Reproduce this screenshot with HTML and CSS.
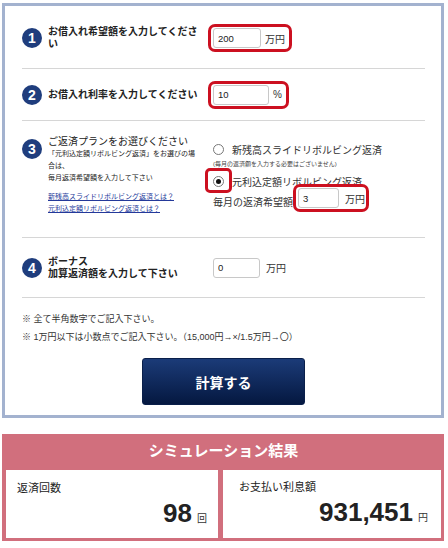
FILE: index.html
```html
<!DOCTYPE html>
<html lang="ja">
<head>
    <meta charset="UTF-8">
    <meta name="viewport" content="width=device-width, initial-scale=1.0">
    <title>返済シミュレーション</title>
    <link rel="stylesheet" href="styles.css">
</head>
<body>

    <div class="form-box">
        <div class="row row-1">
            <div class="row-head">
                <span class="num">1</span>
                <p class="label">お借入れ希望額を入力してください</p>
            </div>
            <div class="row-body">
                <span class="mark"><input class="w48" type="text" value="200"><span class="unit">万円</span></span>
            </div>
        </div>

        <div class="row row-2">
            <div class="row-head">
                <span class="num">2</span>
                <p class="label">お借入れ利率を入力してください</p>
            </div>
            <div class="row-body">
                <span class="mark"><input class="w56" type="text" value="10"><span class="unit">%</span></span>
            </div>
        </div>

        <div class="row row-3">
            <div class="row-head">
                <span class="num">3</span>
                <div class="plan-text">
                    <p class="plan-title">ご返済プランをお選びください</p>
                    <p class="plan-note">「元利込定額リボルビング返済」をお選びの場合は、<br>毎月返済希望額を入力して下さい</p>
                    <p class="plan-links">
                        <a href="#">新残高スライドリボルビング返済とは？</a><br>
                        <a href="#">元利込定額リボルビング返済とは？</a>
                    </p>
                </div>
            </div>
            <div class="row-body plan-options">
                <label class="option"><span class="radio"></span>新残高スライドリボルビング返済</label>
                <p class="option-note">(毎月の返済額を入力する必要はございません)</p>
                <label class="option option-2"><span class="radio checked"></span>元利込定額リボルビング返済</label>
                <div class="monthly">
                    <span class="monthly-label">毎月の返済希望額</span>
                    <span class="mark mark-3"><input class="w41" type="text" value="3"><span class="unit unit-gap">万円</span></span>
                </div>
            </div>
        </div>

        <div class="row row-4">
            <div class="row-head">
                <span class="num">4</span>
                <p class="label">ボーナス<br>加算返済額を入力して下さい</p>
            </div>
            <div class="row-body bonus">
                <input class="w47" type="text" value="0"><span class="unit unit-gap">万円</span>
            </div>
        </div>

        <div class="notes">
            <p>※ 全て半角数字でご記入下さい。</p>
            <p>※ 1万円以下は小数点でご記入下さい。（15,000円→×/1.5万円→〇）</p>
        </div>

        <button class="calc-btn">計算する</button>
    </div>

    <!-- 結果 -->
    <div class="result">
        <div class="result-title">シミュレーション結果</div>
        <div class="result-grid">
            <div class="result-cell cell-left">
                <p class="result-label">返済回数</p>
                <p class="result-value"><span class="big">98</span><span class="small">回</span></p>
            </div>
            <div class="result-cell cell-right">
                <p class="result-label">お支払い利息額</p>
                <p class="result-value"><span class="big">931,451</span><span class="small">円</span></p>
            </div>
        </div>
    </div>

</body>
</html>
```

FILE: styles.css
```css
body {
    font-family: "Liberation Sans", "Noto Sans CJK JP", sans-serif;
    color: #222;
    background-color: #fff;
    margin: 0;
    padding: 3px 4px 0 2px;
}
p {
    margin: 0;
}

/* Formulaire */
.form-box {
    border: 3px solid #a3b2cf;
    padding: 0 16px 10px 17px;
}
.row {
    display: flex;
    align-items: center;
    box-sizing: border-box;
    border-bottom: 1px solid #d6d6d6;
}
.row-1 {
    height: 63px;
    padding-top: 2px;
}
.row-2 {
    height: 52px;
}
.row-3 {
    height: 117px;
    align-items: flex-start;
    padding-top: 15px;
}
.row-4 {
    height: 60px;
}
.row-head {
    width: 186px;
    flex-shrink: 0;
    display: flex;
    align-items: center;
}
.row-3 .row-head {
    align-items: flex-start;
}
.row-body {
    display: flex;
    align-items: center;
}
.num {
    width: 20px;
    height: 20px;
    flex-shrink: 0;
    margin-right: 6px;
    border-radius: 50%;
    background-color: #1f3d7d;
    color: #fff;
    font-weight: bold;
    font-size: 14px;
    display: flex;
    align-items: center;
    justify-content: center;
}
.row-3 .num {
    margin-top: 3px;
}
.label {
    width: 152px;
    font-size: 10px;
    font-weight: bold;
    line-height: 12px;
}

/* Champs */
.mark {
    display: inline-flex;
    align-items: center;
    border: 3px solid #cc1020;
    border-radius: 7px;
    padding: 1px 0 1px 2px;
}
input {
    height: 20px;
    box-sizing: border-box;
    border: 1px solid #c8c8c8;
    border-radius: 3px;
    padding: 0 4px;
    font-family: "Liberation Sans", sans-serif;
    font-size: 9.5px;
    color: #222;
    background-color: #fff;
}
.w41 { width: 41px; }
.w47 { width: 47px; }
.w48 { width: 48px; }
.w56 { width: 56px; }
.unit {
    font-size: 10px;
    padding: 0 4px;
    color: #333;
}
.unit-gap {
    padding: 0 1px 0 6px;
}
.bonus {
    padding-left: 5px;
}

/* Plan de remboursement */
.plan-text {
    width: 152px;
}
.plan-title {
    font-size: 10px;
    line-height: 12px;
}
.plan-note {
    font-size: 7px;
    line-height: 12px;
}
.plan-links {
    margin-top: 7px;
    font-size: 7px;
    line-height: 12px;
}
.plan-links a {
    color: #24399a;
}
.plan-options {
    flex-direction: column;
    align-items: flex-start;
    padding-left: 5px;
    padding-top: 6px;
}
.option {
    display: flex;
    align-items: center;
    height: 14px;
    font-size: 10px;
    color: #333;
}
.option-2 {
    margin-top: 5px;
}
.option-note {
    margin-top: 3px;
    font-size: 6px;
    line-height: 10px;
    color: #444;
}
.radio {
    position: relative;
    width: 11px;
    height: 11px;
    box-sizing: border-box;
    margin-right: 8px;
    border: 1px solid #777;
    border-radius: 50%;
    background-color: #fff;
}
.radio.checked::before {
    content: "";
    position: absolute;
    left: 2px;
    top: 2px;
    width: 5px;
    height: 5px;
    border-radius: 50%;
    background-color: #111;
}
/* encadré rouge par-dessus le bouton radio */
.radio.checked::after {
    content: "";
    position: absolute;
    left: -9px;
    right: -9px;
    top: -9px;
    bottom: -7px;
    border: 3px solid #cc1020;
    border-radius: 5px;
}
.monthly {
    display: flex;
    align-items: center;
    margin-top: -4px;
    margin-left: -5px;
    padding-left: 5px;
}
.monthly-label {
    font-size: 10px;
    color: #333;
    padding-top: 7px;
}

/* Remarques + bouton */
.notes {
    padding-top: 12px;
    font-size: 9px;
    line-height: 18px;
    color: #333;
}
.calc-btn {
    display: block;
    width: 163px;
    height: 47px;
    margin: 12px auto 0;
    border: 1px solid #0a1f4a;
    border-radius: 3px;
    background: linear-gradient(#1b3b78, #051840);
    color: #fff;
    font-family: "Liberation Sans", "Noto Sans CJK JP", sans-serif;
    font-size: 14px;
    font-weight: bold;
    cursor: pointer;
}

/* Résultat */
.result {
    margin-top: 16px;
    background-color: #d16f7d;
    padding: 0 3px 3px 4px;
}
.result-title {
    height: 34px;
    line-height: 34px;
    text-align: center;
    color: #fff;
    font-size: 15px;
    font-weight: bold;
}
.result-grid {
    display: grid;
    grid-template-columns: 212px 1fr;
    gap: 5px;
    padding-top: 2px;
}
.result-cell {
    height: 68px;
    box-sizing: border-box;
    background-color: #fff;
    padding: 10px 11px;
}
.cell-right {
    padding: 9px 13px 10px 16px;
}
.result-label {
    font-size: 11px;
    line-height: 16px;
}
.result-value {
    margin-top: 4px;
    text-align: right;
    line-height: 26px;
}
.big {
    font-size: 26px;
    font-weight: bold;
}
.small {
    font-size: 10px;
    margin-left: 5px;
    color: #333;
}
```
